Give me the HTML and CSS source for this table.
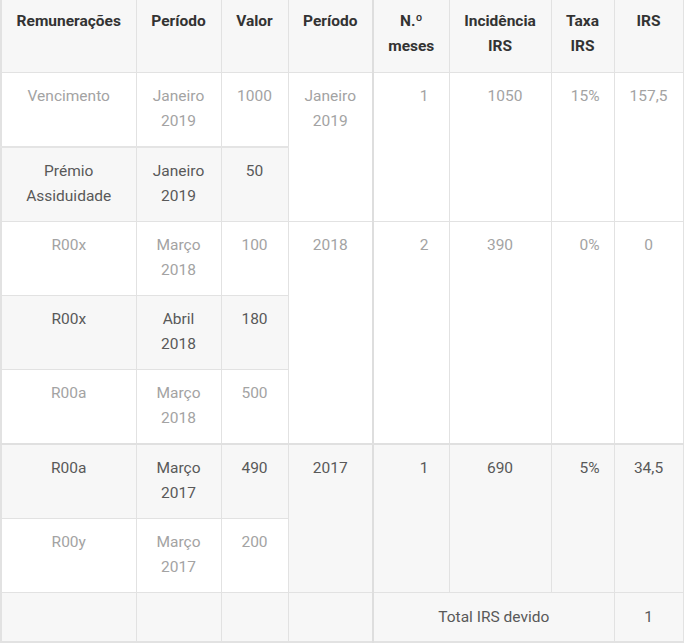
FILE: index.html
```html
<!DOCTYPE html>
<html lang="pt">
<head>
<meta charset="utf-8">
<title>Remunerações</title>
<link rel="stylesheet" href="styles.css">
</head>
<body>
<table class="irs">
  <colgroup>
    <col class="c1"><col class="c2"><col class="c3"><col class="c4"><col class="c5"><col class="c6"><col class="c7"><col class="c8">
  </colgroup>
  <thead>
    <tr>
      <th>Remunerações</th>
      <th>Período</th>
      <th>Valor</th>
      <th>Período</th>
      <th class="split">N.º<br>meses</th>
      <th>Incidência<br>IRS</th>
      <th>Taxa<br>IRS</th>
      <th>IRS</th>
    </tr>
  </thead>
  <tbody>
    <tr class="odd first">
      <td class="thick">Vencimento</td>
      <td class="thick">Janeiro<br>2019</td>
      <td class="thick">1000</td>
      <td rowspan="2">Janeiro<br>2019</td>
      <td class="num split" rowspan="2">1</td>
      <td class="inc" rowspan="2">1050</td>
      <td class="pct" rowspan="2">15%</td>
      <td rowspan="2">157,5</td>
    </tr>
    <tr class="even">
      <td>Prémio<br>Assiduidade</td>
      <td>Janeiro<br>2019</td>
      <td>50</td>
    </tr>
    <tr class="odd">
      <td>R00x</td>
      <td>Março<br>2018</td>
      <td>100</td>
      <td class="group-end" rowspan="3">2018</td>
      <td class="num split group-end" rowspan="3">2</td>
      <td class="group-end" rowspan="3">390</td>
      <td class="pct group-end" rowspan="3">0%</td>
      <td class="group-end" rowspan="3">0</td>
    </tr>
    <tr class="even">
      <td>R00x</td>
      <td>Abril<br>2018</td>
      <td>180</td>
    </tr>
    <tr class="odd">
      <td class="group-end">R00a</td>
      <td class="group-end">Março<br>2018</td>
      <td class="group-end">500</td>
    </tr>
    <tr class="even">
      <td>R00a</td>
      <td>Março<br>2017</td>
      <td>490</td>
      <td rowspan="2">2017</td>
      <td class="num split" rowspan="2">1</td>
      <td rowspan="2">690</td>
      <td class="pct" rowspan="2">5%</td>
      <td rowspan="2">34,5</td>
    </tr>
    <tr class="odd">
      <td>R00y</td>
      <td>Março<br>2017</td>
      <td>200</td>
    </tr>
    <tr class="even total">
      <td></td>
      <td></td>
      <td></td>
      <td></td>
      <td class="split" colspan="3">Total IRS devido</td>
      <td>1</td>
    </tr>
  </tbody>
</table>
</body>
</html>
```

FILE: styles.css
```css
html, body {
  margin: 0;
  padding: 0;
  background: #ffffff;
}

.irs {
  width: 683px;
  table-layout: fixed;
  border-collapse: collapse;
  font-family: Roboto, "Liberation Sans", Arial, sans-serif;
  font-size: 15.5px;
  line-height: 25px;
  border-left: 2px solid #e2e2e2;
  border-right: 1px solid #e2e2e2;
  border-bottom: 2px solid #e2e2e2;
}

.c1 { width: 135px; }
.c2 { width: 85px; }
.c3 { width: 67px; }
.c4 { width: 85px; }
.c5 { width: 76px; }
.c6 { width: 102px; }
.c7 { width: 63px; }
.c8 { width: 69px; }

.irs th,
.irs td {
  border: 1px solid #e2e2e2;
  padding: 11px 2px 12px;
  text-align: center;
  vertical-align: top;
}

.irs th {
  background: #f7f7f7;
  color: #333333;
  font-weight: 700;
  border-top: none;
  padding-top: 9px;
  padding-bottom: 13px;
}

.irs tr.odd td {
  background: #ffffff;
  color: #a3a3a3;
}

.irs tr.even td {
  background: #f7f7f7;
  color: #595959;
}

.irs .split {
  border-left: 2px solid #dedede;
}

.irs td.thick {
  border-bottom: 2px solid #e4e4e4;
}

.irs td.group-end {
  border-bottom: 2px solid #e0e0e0;
}

.irs td.num {
  text-align: right;
  padding-right: 20px;
}

.irs td.inc {
  padding-left: 12px;
}

.irs td.pct {
  text-align: right;
  padding-right: 14px;
}

.irs tr.total td {
  padding-top: 12px;
  padding-bottom: 11px;
}
```
